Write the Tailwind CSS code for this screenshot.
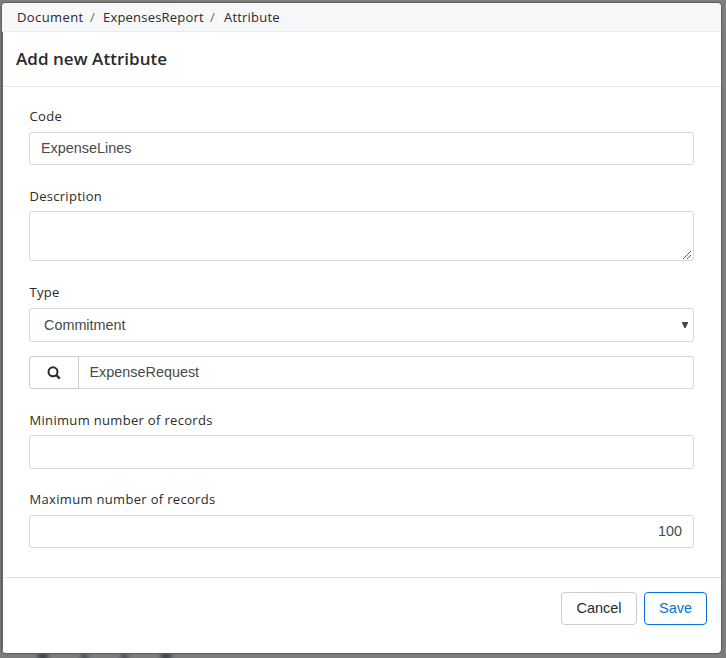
<!DOCTYPE html>
<html lang="en">
<head>
<meta charset="utf-8">
<title>Add new Attribute</title>
<script src="https://cdn.jsdelivr.net/npm/@tailwindcss/browser@4"></script>
</head>
<body class="relative h-[658px] w-[726px] overflow-hidden bg-[#7d7d7d] pt-[3px] pl-[2px] font-['Open_Sans',sans-serif] text-[#292b2c]">
<div class="absolute top-[652px] left-0 flex gap-[33px] pl-[38px] blur-[2px]">
  <span class="h-2 w-[10px] bg-[#3c444b]"></span><span class="h-2 w-[7px] bg-[#4c5258]"></span><span class="h-2 w-[7px] bg-[#4c5258]"></span><span class="h-2 w-[10px] bg-[#3c444b]"></span>
</div>
<main class="relative flex h-[650px] w-[719px] flex-col overflow-hidden rounded-[4px] bg-white shadow-[0_0_1px_1px_#5c5c5c]">
  <nav class="flex h-[29px] shrink-0 items-center border-b border-[#ebebed] bg-[#f6f7f9] pl-[15px] text-[13px] leading-[18px] tracking-[0.2px]">
    <span class="w-[73px] tracking-[0.4px]">Document</span><span class="w-[13px] text-[#636c72]">/</span><span class="w-[107px]">ExpensesReport</span><span class="w-[14px] text-[#636c72]">/</span><span>Attribute</span>
  </nav>
  <div class="flex min-h-0 flex-1 flex-col border-l border-[#666]">
    <header class="flex h-[55px] shrink-0 items-center border-b border-[#ebebeb] pl-[13px]">
      <h1 class="text-[17px] leading-6 font-semibold tracking-[0.05px]">Add new Attribute</h1>
    </header>
    <form class="flex h-[491px] shrink-0 flex-col border-b border-[#e5e5e5] pr-[27px] pl-[26px] text-[13px]">
      <label class="mt-[19px] h-[26px] pl-[0.5px] leading-5 tracking-[0.32px]">Code</label>
      <div class="flex h-[33px] items-center rounded-[3px] border border-[#d6d8da] pl-[11px] font-['Liberation_Sans',sans-serif] text-[14.4px] text-[#464a4c]">ExpenseLines</div>
      <label class="mt-[21px] h-[25px] pl-[0.5px] leading-5 tracking-[0.28px]">Description</label>
      <div class="flex h-[50px] items-end justify-end rounded-[3px] border border-[#d6d8da] pr-px">
        <svg class="size-[10px]" viewBox="0 0 10 10" fill="none" stroke="#606060" stroke-width="1"><path d="M1 9 9 1M5 9 9 5"/></svg>
      </div>
      <label class="mt-[21px] h-[26px] pl-[0.5px] leading-5 tracking-[0.32px]">Type</label>
      <div class="flex h-[34px] items-center justify-between rounded-[3px] border border-[#d6d8da] pr-[5px] pl-[14px] font-['Liberation_Sans',sans-serif] text-[14.4px] text-[#464a4c]"><span class="pt-[2px]">Commitment</span>
        <svg class="mb-px h-[6px] w-[6px]" viewBox="0 0 6 6" fill="#464a4c"><path d="M0 0h6v1L3.6 6H2.4L0 1Z"/></svg>
      </div>
      <div class="mt-[14px] flex h-[33px]">
        <span class="flex w-[50px] items-center justify-center rounded-l-[3px] border border-[#c9cbcc]">
          <svg class="size-[14px]" viewBox="0 0 14 14" fill="none" stroke="#292b2c"><circle cx="6" cy="5.8" r="4.5" stroke-width="2"/><path d="m9.2 9 3.6 3.6" stroke-width="2.3"/></svg>
        </span>
        <span class="flex flex-1 items-center rounded-r-[3px] border border-l-0 border-[#d6d8da] pl-[10.5px] font-['Liberation_Sans',sans-serif] text-[14.4px] text-[#464a4c]">ExpenseRequest</span>
      </div>
      <label class="mt-[21px] h-[25px] pl-[0.5px] leading-5 tracking-[0.32px]">Minimum number of records</label>
      <div class="h-[34px] rounded-[3px] border border-[#d6d8da]"></div>
      <label class="mt-[20px] h-[26px] pl-[0.5px] leading-5 tracking-[0.32px]">Maximum number of records</label>
      <div class="flex h-[33px] items-center justify-end rounded-[3px] border border-[#d6d8da] pr-[11px] font-['Liberation_Sans',sans-serif] text-[14.4px] text-[#464a4c]">100</div>
    </form>
    <footer class="flex justify-end gap-[7px] pt-[14px] pr-[14px] font-['Liberation_Sans',sans-serif] text-[14.5px]">
      <button class="h-[33px] w-[76px] rounded-[4px] border border-[#ccc]">Cancel</button>
      <button class="h-[33px] w-[63px] rounded-[4px] border border-[#0275d8] text-[#0275d8]">Save</button>
    </footer>
  </div>
</main>
</body>
</html>
